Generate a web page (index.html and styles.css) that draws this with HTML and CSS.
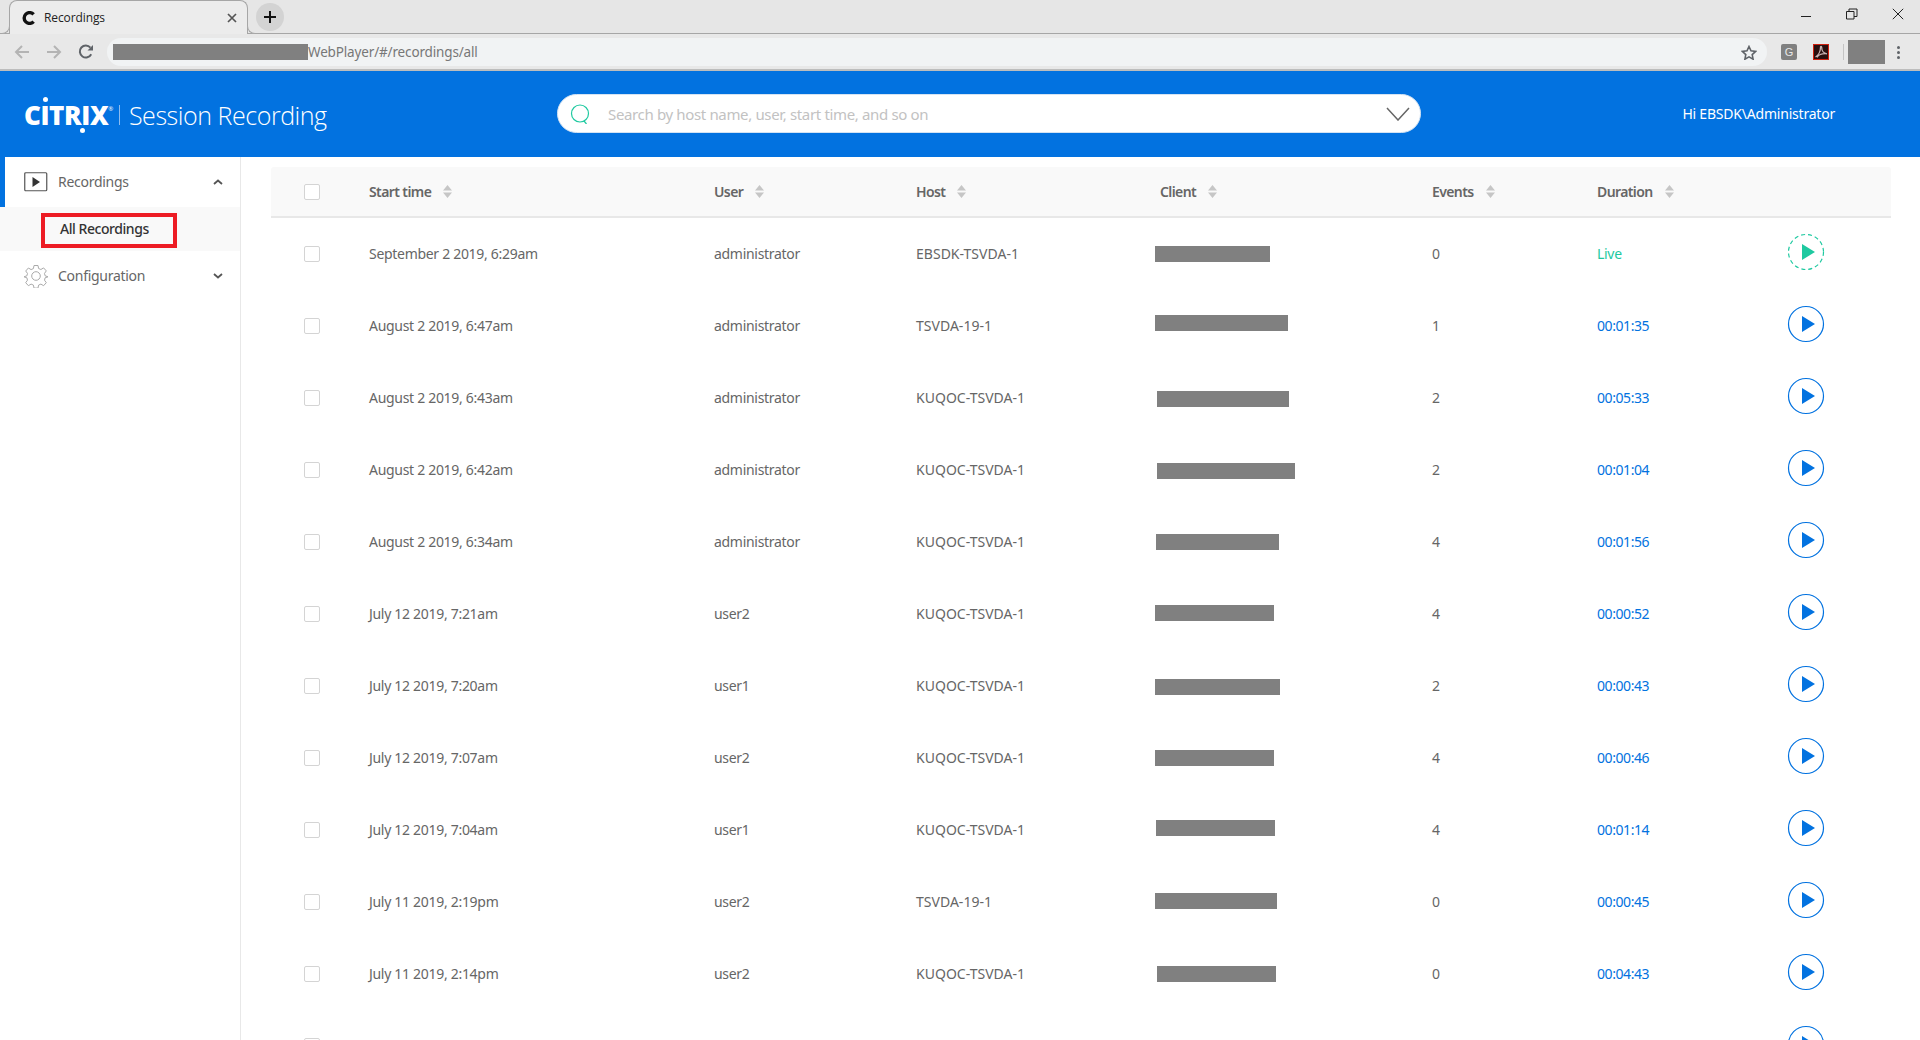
FILE: index.html
```html
<!DOCTYPE html>
<html lang="en">
<head>
<meta charset="utf-8">
<title>Recordings</title>
<link rel="stylesheet" href="styles.css">
</head>
<body>
<div class="tabstrip">
  <div class="tab">
    <svg class="favicon" width="14" height="14" viewBox="0 0 14 14"><path d="M11.6 3.4A5.4 5.4 0 1 0 11.6 10.6" fill="none" stroke="#111" stroke-width="3.4"/></svg>
    <span class="tab-title">Recordings</span>
    <svg class="tab-close" width="10" height="10" viewBox="0 0 10 10"><path d="M1 1l8 8M9 1l-8 8" stroke="#555" stroke-width="1.7"/></svg>
  </div>
  <div class="newtab"><svg width="14" height="14" viewBox="0 0 14 14"><path d="M7 1v12M1 7h12" stroke="#111" stroke-width="2"/></svg></div>
  <div class="winctl">
    <svg width="12" height="12" viewBox="0 0 12 12"><path d="M1 8.5h10" stroke="#222" stroke-width="1"/></svg>
    <svg width="12" height="12" viewBox="0 0 12 12"><path d="M.5 3.5h7.5v7.5h-7.5zM3 3.5V1h8v7.5H8" fill="none" stroke="#222" stroke-width="1"/></svg>
    <svg width="12" height="12" viewBox="0 0 12 12"><path d="M.8 .8l10.4 10.4M11.2 .8L.8 11.2" stroke="#222" stroke-width="1"/></svg>
  </div>
</div>
<div class="toolbar">
  <svg class="nav" width="16" height="14" viewBox="0 0 16 14"><path d="M15 7H2M8 1L2 7l6 6" fill="none" stroke="#b4b4b4" stroke-width="2"/></svg>
  <svg class="nav" width="16" height="14" viewBox="0 0 16 14"><path d="M1 7h13M8 1l6 6-6 6" fill="none" stroke="#b4b4b4" stroke-width="2"/></svg>
  <svg class="nav" width="16" height="16" viewBox="0 0 16 16"><path d="M13.2 10.2A6 6 0 1 1 12.4 3.6" fill="none" stroke="#5f6368" stroke-width="2"/><path d="M9.5 6.5H15V1z" fill="#5f6368"/></svg>
  <div class="omnibox">
    <span class="redact url-redact"></span><span class="url">WebPlayer/#/recordings/all</span>
    <svg class="star" width="16" height="15" viewBox="0 0 16 15"><path d="M8 1.5l2 4.3 4.7.6-3.5 3.2.9 4.6L8 11.9l-4.1 2.3.9-4.6L1.3 6.4 6 5.8z" fill="none" stroke="#5f6368" stroke-width="1.6"/></svg>
  </div>
  <div class="ext ext-g">G</div>
  <div class="ext ext-pdf"><svg width="14" height="14" viewBox="0 0 14 14"><path d="M1.5 12C4 10.5 6.5 6.500 6.500 2.500c0-1.500 1.200-1.500 1.200 0C7.700 6 10 8.500 13 8.800c-3.500-.3-8 .5-10 3.500" fill="none" stroke="#c9b3b3" stroke-width="1.300"/></svg></div>
  <div class="tool-sep"></div>
  <span class="redact profile-redact"></span>
  <div class="kebab"><i></i><i></i><i></i></div>
</div>
<header class="appbar">
  <div class="brand">
    <span class="logo">CITRIX<sup>®</sup></span>
    <span class="brand-sep"></span>
    <span class="product">Session Recording</span>
  </div>
  <div class="search">
    <svg class="search-icon" width="23" height="20" viewBox="0 0 23 20"><circle cx="10" cy="9.500" r="8.500" fill="none" stroke="#1ec9a0" stroke-width="1.200"/><path d="M14 17l2.500 3" stroke="#1ec9a0" stroke-width="1.200"/></svg>
    <span class="placeholder">Search by host name, user, start time, and so on</span>
    <svg class="search-chev" width="24" height="14" viewBox="0 0 24 14"><path d="M1 1l11 12L23 1" fill="none" stroke="#666" stroke-width="1.500"/></svg>
  </div>
  <div class="greeting">Hi EBSDK\Administrator</div>
</header>
<div class="layout">
  <nav class="sidebar">
    <div class="nav-item nav-active">
      <svg class="nav-icon" width="24" height="20" viewBox="0 0 24 20"><rect x=".75" y=".75" width="22" height="18" rx="1" fill="none" stroke="#555" stroke-width="1.200"/><path d="M8.500 5l7.500 5-7.500 5z" fill="#333"/></svg>
      <span class="nav-label">Recordings</span>
      <svg class="nav-chev" width="10" height="6" viewBox="0 0 10 6"><path d="M1 5l4-3.500L9 5" fill="none" stroke="#555" stroke-width="1.800"/></svg>
    </div>
    <div class="nav-sub"><span class="nav-sub-box">All Recordings</span></div>
    <div class="nav-item">
      <svg class="nav-icon" width="24" height="24" viewBox="0 0 24 24"><path d="M10 1.500h4l.6 3 2.300 1 2.700-1.600 2.700 3-1.800 2.500.6 2.400 2.900 1v0l-2.900 1-.6 2.400 1.800 2.500-2.700 3-2.700-1.600-2.300 1-.6 3h-4l-.6-3-2.300-1-2.700 1.600-2.700-3 1.800-2.500-.6-2.400-2.900-1 2.900-1 .6-2.400L1.700 7l2.700-3 2.700 1.600 2.300-1z" fill="none" stroke="#aaa" stroke-width="1"/><circle cx="12" cy="12" r="4.300" fill="none" stroke="#aaa" stroke-width="1"/></svg>
      <span class="nav-label">Configuration</span>
      <svg class="nav-chev" width="10" height="6" viewBox="0 0 10 6"><path d="M1 1l4 3.500L9 1" fill="none" stroke="#555" stroke-width="1.800"/></svg>
    </div>
  </nav>
  <main class="content">
    <div class="row head">
      <span class="check"></span>
      <span class="th">Start time<svg class="sort" viewBox="0 0 9 13"><path d="M4.500 0L9 5.500H0zM4.500 13L0 7.500h9z" fill="#c6c6c6"/></svg></span>
      <span class="th">User<svg class="sort" viewBox="0 0 9 13"><path d="M4.500 0L9 5.500H0zM4.500 13L0 7.500h9z" fill="#c6c6c6"/></svg></span>
      <span class="th">Host<svg class="sort" viewBox="0 0 9 13"><path d="M4.500 0L9 5.500H0zM4.500 13L0 7.500h9z" fill="#c6c6c6"/></svg></span>
      <span class="th">Client<svg class="sort" viewBox="0 0 9 13"><path d="M4.500 0L9 5.500H0zM4.500 13L0 7.500h9z" fill="#c6c6c6"/></svg></span>
      <span class="th">Events<svg class="sort" viewBox="0 0 9 13"><path d="M4.500 0L9 5.500H0zM4.500 13L0 7.500h9z" fill="#c6c6c6"/></svg></span>
      <span class="th">Duration<svg class="sort" viewBox="0 0 9 13"><path d="M4.500 0L9 5.500H0zM4.500 13L0 7.500h9z" fill="#c6c6c6"/></svg></span>
      <span></span>
    </div>

    <div class="row">
      <span class="check"></span><span class="td">September 2 2019, 6:29am</span><span class="td">administrator</span><span class="td">EBSDK-TSVDA-1</span>
      <span class="redact bar" style="width:115px;transform:translate(-5px,0)"></span><span class="td">0</span><span class="td live">Live</span>
      <svg class="play" width="38" height="38" viewBox="0 0 38 38"><circle cx="19" cy="19" r="17.500" fill="none" stroke="#1ec9a0" stroke-width="1.200" stroke-dasharray="4 3"/><path d="M15 11v16l13-8z" fill="#1ec9a0"/></svg>
    </div>
    <div class="row">
      <span class="check"></span><span class="td">August 2 2019, 6:47am</span><span class="td">administrator</span><span class="td">TSVDA-19-1</span>
      <span class="redact bar" style="width:133px;transform:translate(-5px,-3px)"></span><span class="td">1</span><span class="td dur">00:01:35</span>
      <svg class="play" width="38" height="38" viewBox="0 0 38 38"><circle cx="19" cy="19" r="17.500" fill="none" stroke="#0272e0" stroke-width="1.200"/><path d="M15 11v16l13-8z" fill="#0272e0"/></svg>
    </div>
    <div class="row">
      <span class="check"></span><span class="td">August 2 2019, 6:43am</span><span class="td">administrator</span><span class="td">KUQOC-TSVDA-1</span>
      <span class="redact bar" style="width:132px;transform:translate(-3px,1px)"></span><span class="td">2</span><span class="td dur">00:05:33</span>
      <svg class="play" width="38" height="38" viewBox="0 0 38 38"><circle cx="19" cy="19" r="17.500" fill="none" stroke="#0272e0" stroke-width="1.200"/><path d="M15 11v16l13-8z" fill="#0272e0"/></svg>
    </div>
    <div class="row">
      <span class="check"></span><span class="td">August 2 2019, 6:42am</span><span class="td">administrator</span><span class="td">KUQOC-TSVDA-1</span>
      <span class="redact bar" style="width:138px;transform:translate(-3px,1px)"></span><span class="td">2</span><span class="td dur">00:01:04</span>
      <svg class="play" width="38" height="38" viewBox="0 0 38 38"><circle cx="19" cy="19" r="17.500" fill="none" stroke="#0272e0" stroke-width="1.200"/><path d="M15 11v16l13-8z" fill="#0272e0"/></svg>
    </div>
    <div class="row">
      <span class="check"></span><span class="td">August 2 2019, 6:34am</span><span class="td">administrator</span><span class="td">KUQOC-TSVDA-1</span>
      <span class="redact bar" style="width:123px;transform:translate(-4px,0)"></span><span class="td">4</span><span class="td dur">00:01:56</span>
      <svg class="play" width="38" height="38" viewBox="0 0 38 38"><circle cx="19" cy="19" r="17.500" fill="none" stroke="#0272e0" stroke-width="1.200"/><path d="M15 11v16l13-8z" fill="#0272e0"/></svg>
    </div>
    <div class="row">
      <span class="check"></span><span class="td">July 12 2019, 7:21am</span><span class="td">user2</span><span class="td">KUQOC-TSVDA-1</span>
      <span class="redact bar" style="width:119px;transform:translate(-5px,-1px)"></span><span class="td">4</span><span class="td dur">00:00:52</span>
      <svg class="play" width="38" height="38" viewBox="0 0 38 38"><circle cx="19" cy="19" r="17.500" fill="none" stroke="#0272e0" stroke-width="1.200"/><path d="M15 11v16l13-8z" fill="#0272e0"/></svg>
    </div>
    <div class="row">
      <span class="check"></span><span class="td">July 12 2019, 7:20am</span><span class="td">user1</span><span class="td">KUQOC-TSVDA-1</span>
      <span class="redact bar" style="width:125px;transform:translate(-5px,1px)"></span><span class="td">2</span><span class="td dur">00:00:43</span>
      <svg class="play" width="38" height="38" viewBox="0 0 38 38"><circle cx="19" cy="19" r="17.500" fill="none" stroke="#0272e0" stroke-width="1.200"/><path d="M15 11v16l13-8z" fill="#0272e0"/></svg>
    </div>
    <div class="row">
      <span class="check"></span><span class="td">July 12 2019, 7:07am</span><span class="td">user2</span><span class="td">KUQOC-TSVDA-1</span>
      <span class="redact bar" style="width:119px;transform:translate(-5px,0)"></span><span class="td">4</span><span class="td dur">00:00:46</span>
      <svg class="play" width="38" height="38" viewBox="0 0 38 38"><circle cx="19" cy="19" r="17.500" fill="none" stroke="#0272e0" stroke-width="1.200"/><path d="M15 11v16l13-8z" fill="#0272e0"/></svg>
    </div>
    <div class="row">
      <span class="check"></span><span class="td">July 12 2019, 7:04am</span><span class="td">user1</span><span class="td">KUQOC-TSVDA-1</span>
      <span class="redact bar" style="width:119px;transform:translate(-4px,-2px)"></span><span class="td">4</span><span class="td dur">00:01:14</span>
      <svg class="play" width="38" height="38" viewBox="0 0 38 38"><circle cx="19" cy="19" r="17.500" fill="none" stroke="#0272e0" stroke-width="1.200"/><path d="M15 11v16l13-8z" fill="#0272e0"/></svg>
    </div>
    <div class="row">
      <span class="check"></span><span class="td">July 11 2019, 2:19pm</span><span class="td">user2</span><span class="td">TSVDA-19-1</span>
      <span class="redact bar" style="width:122px;transform:translate(-5px,-1px)"></span><span class="td">0</span><span class="td dur">00:00:45</span>
      <svg class="play" width="38" height="38" viewBox="0 0 38 38"><circle cx="19" cy="19" r="17.500" fill="none" stroke="#0272e0" stroke-width="1.200"/><path d="M15 11v16l13-8z" fill="#0272e0"/></svg>
    </div>
    <div class="row">
      <span class="check"></span><span class="td">July 11 2019, 2:14pm</span><span class="td">user2</span><span class="td">KUQOC-TSVDA-1</span>
      <span class="redact bar" style="width:119px;transform:translate(-3px,0)"></span><span class="td">0</span><span class="td dur">00:04:43</span>
      <svg class="play" width="38" height="38" viewBox="0 0 38 38"><circle cx="19" cy="19" r="17.500" fill="none" stroke="#0272e0" stroke-width="1.200"/><path d="M15 11v16l13-8z" fill="#0272e0"/></svg>
    </div>
    <div class="row">
      <span class="check"></span><span></span><span></span><span></span><span></span><span></span><span></span>
      <svg class="play" width="38" height="38" viewBox="0 0 38 38"><circle cx="19" cy="19" r="17.500" fill="none" stroke="#0272e0" stroke-width="1.200"/><path d="M15 11v16l13-8z" fill="#0272e0"/></svg>
    </div>
  </main>
</div>
</body>
</html>
```
FILE: styles.css
```css
* { box-sizing: border-box; }
html { margin: 0; height: 1040px; overflow: hidden; }
body {
  margin: 0;
  height: 1040px;
  overflow: hidden;
  display: flex;
  flex-direction: column;
  background: #fff;
  color: #666;
  font-family: "Noto Sans", "Open Sans", sans-serif;
  font-size: 14px;
}
.tabstrip {
  height: 34px;
  flex: none;
  display: flex;
  align-items: flex-start;
  background: #e6e6e6;
  border-bottom: 1px solid #a6a6a6;
  padding-left: 9px;
}
.tab {
  position: relative;
  width: 239px;
  height: 34px;
  flex: none;
  display: flex;
  align-items: center;
  padding: 0 10px 0 12px;
  background: #ececec;
  border: 1px solid #a6a6a6;
  border-bottom: 0;
  border-radius: 8px 8px 0 0;
}
.tab::before, .tab::after {
  content: "";
  position: absolute;
  bottom: 0;
  width: 9px;
  height: 9px;
  border-bottom: 1px solid #a6a6a6;
}
.tab::before { left: -10px; border-right: 1px solid #a6a6a6; border-bottom-right-radius: 8px; background: #e6e6e6; }
.tab::after { right: -10px; border-left: 1px solid #a6a6a6; border-bottom-left-radius: 8px; background: #e6e6e6; }
.favicon { flex: none; }
.tab-title {
  margin-left: 8px;
  flex: 1;
  font-family: "Open Sans", sans-serif;
  font-size: 12px;
  letter-spacing: -.1px;
  color: #222;
}
.tab-close { flex: none; }
.newtab {
  width: 28px;
  height: 28px;
  margin: 3px 0 0 8px;
  border-radius: 50%;
  background: #d3d3d3;
  display: flex;
  align-items: center;
  justify-content: center;
}
.winctl {
  margin-left: auto;
  display: flex;
  gap: 34px;
  padding: 8px 16px 0 0;
}
.toolbar {
  height: 37px;
  flex: none;
  display: flex;
  align-items: center;
  background: #e8e8e8;
  border-bottom: 2px solid #bdbdbd;
  padding: 1px 0 0 14px;
}
.nav { flex: none; margin-right: 16px; }
.nav + .nav + .nav { margin-right: 13px; margin-left: 0; }
.omnibox {
  width: 1660px;
  height: 28px;
  display: flex;
  align-items: center;
  background: #f1f3f4;
  border-radius: 14px;
  padding-left: 6px;
  flex: none;
}
.redact { display: block; background: #808080; }
.url-redact { width: 195px; height: 16px; flex: none; }
.url { font-size: 13.5px; color: #777; letter-spacing: -.15px; }
.star { margin: 0 10px 0 auto; }
.ext {
  width: 16px;
  height: 16px;
  flex: none;
  display: flex;
  align-items: center;
  justify-content: center;
}
.ext-g { margin-left: 14px; background: #808080; color: #e8e8e8; border-radius: 2px; font-size: 11px; font-family: "Liberation Sans", sans-serif; }
.ext-pdf { margin-left: 16px; background: #2a0f0f; border: 1px solid #d0200f; }
.tool-sep { width: 1px; height: 16px; margin: 0 4px 0 14px; background: #c4c4c4; flex: none; }
.profile-redact { width: 37px; height: 24px; flex: none; }
.kebab { margin-left: 12px; display: flex; flex-direction: column; gap: 2px; }
.kebab i { display: block; width: 3px; height: 3px; border-radius: 50%; background: #5f6368; }

.appbar {
  height: 86px;
  flex: none;
  display: flex;
  align-items: center;
  background: #0272e0;
  color: #fff;
  padding: 0 85px 1px 24px;
}
.brand {
  width: 533px;
  flex: none;
  display: flex;
  align-items: center;
  margin-top: 2px;
}
.logo {
  position: relative;
  font-family: "Open Sans", sans-serif;
  font-weight: 800;
  font-size: 26px;
  line-height: 30px;
  letter-spacing: -.4px;
}
.logo sup { font-size: 6px; font-weight: 400; vertical-align: 14px; line-height: 0; }
.logo::before, .logo::after {
  content: "";
  position: absolute;
  width: 5px;
  height: 5px;
  border-radius: 50%;
  background: #fff;
}
.logo::before { left: 19px; top: -3px; }
.logo::after { left: 56px; top: 28px; }
.brand-sep { width: 1px; height: 20px; margin: 0 9px 0 6px; background: #8dbcf0; }
.product { font-family: "Open Sans", sans-serif; font-weight: 300; font-size: 25px; line-height: 30px; letter-spacing: -.45px; }
.search {
  width: 864px;
  height: 39px;
  flex: none;
  display: flex;
  align-items: center;
  background: #fff;
  border: 1px solid #d4e3f3;
  border-radius: 20px;
  padding: 0 10px 0 12px;
}
.search-icon { flex: none; }
.placeholder { flex: 1; margin-left: 15px; color: #c2c2c2; font-size: 15px; letter-spacing: -.35px; }
.search-chev { flex: none; }
.greeting { margin-left: auto; font-size: 14px; letter-spacing: -.21px; }

.layout { flex: 1; display: flex; min-height: 0; }
.sidebar {
  width: 241px;
  flex: none;
  border-right: 1px solid #e8e8e8;
}
.nav-item {
  height: 50px;
  display: flex;
  align-items: center;
  padding: 0 17px 0 24px;
}
.nav-active { border-left: 5px solid #0272e0; padding-left: 19px; }
.nav-icon { flex: none; width: 24px; }
.nav-label { margin-left: 10px; flex: 1; color: #666; letter-spacing: -.28px; padding-bottom: 2px; }
.nav-chev { flex: none; }
.nav-sub {
  height: 44px;
  display: flex;
  align-items: center;
  background: #f9f9f9;
  padding-left: 41px;
}
.nav-sub-box {
  width: 136px;
  height: 35px;
  display: flex;
  align-items: center;
  padding: 0 0 3px 15px;
  border: 4px solid #ed1c24;
  color: #333;
  font-weight: 500;
  letter-spacing: -.45px;
  margin-top: 2px;
}
.content { flex: 1; padding: 10px 29px 0 30px; }
.row {
  display: grid;
  grid-template-columns: 98px 345px 202px 244px 272px 165px 191px 1fr;
  align-items: center;
  height: 72px;
}
.row > .check { margin-left: 33px; }
.head {
  height: 51px;
  background: #f9f9f9;
  border-bottom: 2px solid #e8e8e8;
  border-radius: 3px 3px 0 0;
}
.check {
  width: 16px;
  height: 16px;
  background: #fff;
  border: 1px solid #d4d4d4;
  border-radius: 2px;
}
.th { display: flex; align-items: center; font-weight: 600; color: #666; letter-spacing: -.6px; }
.td { letter-spacing: -.3px; padding-bottom: 2px; }
.row > .td:nth-child(4) { letter-spacing: .02px; }
.sort { margin-left: 12px; flex: none; width: 9px; height: 13px; }
.bar { height: 16px; }
.live { color: #1ec9a0; }
.row > .dur { color: #0272e0; letter-spacing: -.42px; }
.play { display: block; margin: -4px 0 0 -1px; }
```
